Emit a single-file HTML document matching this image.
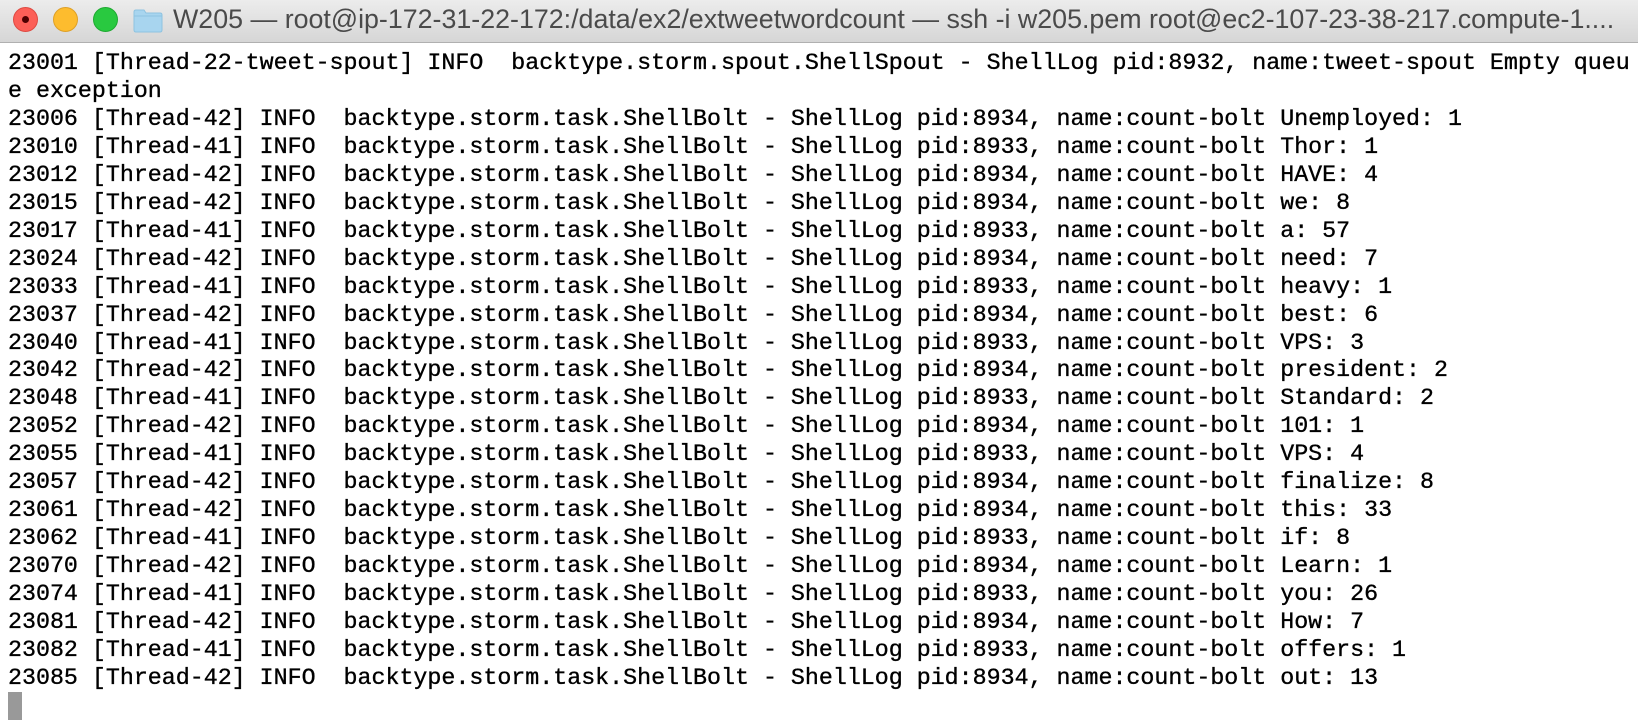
<!DOCTYPE html>
<html><head><meta charset="utf-8"><style>
html,body{margin:0;padding:0;width:1638px;height:726px;overflow:hidden;background:#fff}
.tb{position:absolute;left:0;top:0;width:1638px;height:42px;background:linear-gradient(#ececec,#d6d6d6);border-bottom:1px solid #b0b0b0}
.dot{position:absolute;top:7px;width:25px;height:25px;border-radius:50%;box-sizing:border-box}
.title{position:absolute;left:173px;top:4px;font:26.8px "Liberation Sans",sans-serif;color:#4a4a4a;white-space:nowrap}
pre{position:absolute;left:8px;top:50px;margin:0;font:23.3px/27.95px "Liberation Mono",monospace;color:#000;-webkit-text-stroke:0.35px #000}
.cur{position:absolute;left:8px;top:692px;width:14px;height:28px;background:#999}
</style></head><body>
<div class="tb">
<div class="dot" style="left:13px;background:#fc5f57;border:1px solid #de4a42"><div style="position:absolute;left:8px;top:8px;width:7px;height:7px;border-radius:50%;background:#4d0000"></div></div>
<div class="dot" style="left:53px;background:#fdbc2e;border:1px solid #dea027"></div>
<div class="dot" style="left:93px;background:#29c940;border:1px solid #1eaa31"></div>
<svg style="position:absolute;left:133px;top:9px" width="30" height="24" viewBox="0 0 30 24"><path d="M1 3 Q1 1 3 1 H11 L13 4 H27 Q29 4 29 6 V21 Q29 23 27 23 H3 Q1 23 1 21 Z" fill="#a8d5ef" stroke="#8ec3e0"/><path d="M1 7 H29" stroke="#8ec3e0"/></svg>
<div class="title">W205 — root@ip-172-31-22-172:/data/ex2/extweetwordcount — ssh -i w205.pem root@ec2-107-23-38-217.compute-1....</div>
</div>
<pre>23001 [Thread-22-tweet-spout] INFO  backtype.storm.spout.ShellSpout - ShellLog pid:8932, name:tweet-spout Empty queu
e exception
23006 [Thread-42] INFO  backtype.storm.task.ShellBolt - ShellLog pid:8934, name:count-bolt Unemployed: 1
23010 [Thread-41] INFO  backtype.storm.task.ShellBolt - ShellLog pid:8933, name:count-bolt Thor: 1
23012 [Thread-42] INFO  backtype.storm.task.ShellBolt - ShellLog pid:8934, name:count-bolt HAVE: 4
23015 [Thread-42] INFO  backtype.storm.task.ShellBolt - ShellLog pid:8934, name:count-bolt we: 8
23017 [Thread-41] INFO  backtype.storm.task.ShellBolt - ShellLog pid:8933, name:count-bolt a: 57
23024 [Thread-42] INFO  backtype.storm.task.ShellBolt - ShellLog pid:8934, name:count-bolt need: 7
23033 [Thread-41] INFO  backtype.storm.task.ShellBolt - ShellLog pid:8933, name:count-bolt heavy: 1
23037 [Thread-42] INFO  backtype.storm.task.ShellBolt - ShellLog pid:8934, name:count-bolt best: 6
23040 [Thread-41] INFO  backtype.storm.task.ShellBolt - ShellLog pid:8933, name:count-bolt VPS: 3
23042 [Thread-42] INFO  backtype.storm.task.ShellBolt - ShellLog pid:8934, name:count-bolt president: 2
23048 [Thread-41] INFO  backtype.storm.task.ShellBolt - ShellLog pid:8933, name:count-bolt Standard: 2
23052 [Thread-42] INFO  backtype.storm.task.ShellBolt - ShellLog pid:8934, name:count-bolt 101: 1
23055 [Thread-41] INFO  backtype.storm.task.ShellBolt - ShellLog pid:8933, name:count-bolt VPS: 4
23057 [Thread-42] INFO  backtype.storm.task.ShellBolt - ShellLog pid:8934, name:count-bolt finalize: 8
23061 [Thread-42] INFO  backtype.storm.task.ShellBolt - ShellLog pid:8934, name:count-bolt this: 33
23062 [Thread-41] INFO  backtype.storm.task.ShellBolt - ShellLog pid:8933, name:count-bolt if: 8
23070 [Thread-42] INFO  backtype.storm.task.ShellBolt - ShellLog pid:8934, name:count-bolt Learn: 1
23074 [Thread-41] INFO  backtype.storm.task.ShellBolt - ShellLog pid:8933, name:count-bolt you: 26
23081 [Thread-42] INFO  backtype.storm.task.ShellBolt - ShellLog pid:8934, name:count-bolt How: 7
23082 [Thread-41] INFO  backtype.storm.task.ShellBolt - ShellLog pid:8933, name:count-bolt offers: 1
23085 [Thread-42] INFO  backtype.storm.task.ShellBolt - ShellLog pid:8934, name:count-bolt out: 13</pre>
<div class="cur"></div>
</body></html>
